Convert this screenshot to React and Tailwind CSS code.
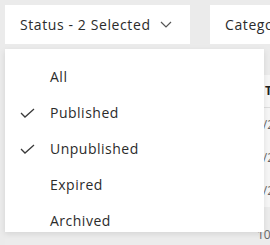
import React from "react";

const font = { fontFamily: '"Open Sans", "DejaVu Sans", sans-serif' };

function Check() {
  return (
    <svg width="15" height="10" viewBox="0 0 15 10" fill="none">
      <polyline points="1,5 5,9 14,1" stroke="#3a3a3a" strokeWidth="1.3" fill="none" />
    </svg>
  );
}

function Item({ label, checked }) {
  return (
    <div className="flex items-center h-[20px]">
      <div className="w-[45px] pl-[15px] flex items-center">{checked ? <Check /> : null}</div>
      <span className="text-[14px] leading-[20px] font-medium tracking-[0.5px] text-[#2b2b2b]">{label}</span>
    </div>
  );
}

export default function App() {
  return (
    <div className="relative w-[270px] h-[245px] overflow-hidden bg-[#ebebeb]" style={font}>
      {/* toolbar */}
      <div className="flex pt-[5px] pl-[5px] gap-[20px] h-[44px]">
        <div className="w-[185px] shrink-0 h-[39px] bg-white flex items-center pl-[15px] pr-[15px]">
          <span className="text-[14px] font-medium tracking-[0.6px] text-[#2b2b2b] whitespace-nowrap">Status - 2 Selected</span>
          <svg className="ml-[9px]" width="12" height="7" viewBox="0 0 12 7" fill="none">
            <polyline points="1,1 6,6 11,1" stroke="#555" strokeWidth="1.2" fill="none" />
          </svg>
        </div>
        <div className="w-[120px] shrink-0 h-[39px] bg-white flex items-center pl-[15px]">
          <span className="text-[14px] font-medium tracking-[0.6px] text-[#2b2b2b] whitespace-nowrap">Category</span>
        </div>
      </div>
      {/* table behind */}
      <div className="mt-[5px] ml-[5px] h-[200px] bg-[#f6f6f6] text-[12px] text-[#666]">
        <div className="h-[26px] bg-[#ebebeb]" />
        <div className="h-[32px] flex items-center pl-[260px] font-bold text-[#222]">Title</div>
        <div className="h-px bg-[#ddd]" />
        <div className="h-[33px] flex items-center pl-[226px] whitespace-nowrap">10/18/2022</div>
        <div className="h-[33px] flex items-center pl-[226px] whitespace-nowrap">10/18/2022</div>
        <div className="h-[33px] flex items-center pl-[226px] whitespace-nowrap">10/18/2022</div>
        <div className="h-[40px] pt-[20px] pl-[252px] leading-[16px] whitespace-nowrap bg-[#ececec]">10/18/2022</div>
      </div>
      {/* dropdown */}
      <div className="absolute left-[5px] top-[49px] w-[259px] h-[183px] bg-white shadow-[0_2px_6px_rgba(0,0,0,0.1)] flex flex-col gap-[16px] pt-[18px]">
        <Item label="All" />
        <Item label="Published" checked />
        <Item label="Unpublished" checked />
        <Item label="Expired" />
        <Item label="Archived" />
      </div>
    </div>
  );
}
